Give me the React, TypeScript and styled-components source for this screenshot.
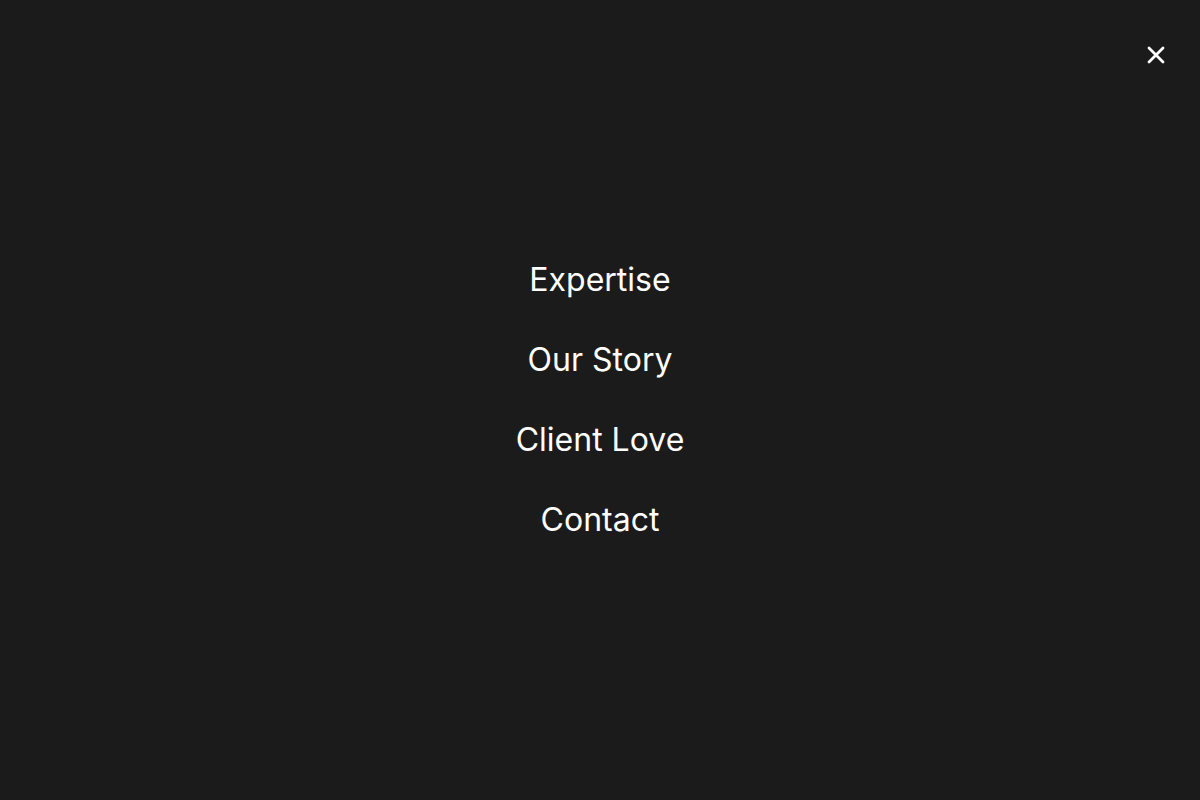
import React from 'react';
import styled, { createGlobalStyle } from 'styled-components';

const GlobalStyle = createGlobalStyle`
  html, body {
    margin: 0;
    padding: 0;
    background: #1b1b1b;
    font-family: Inter, "Noto Sans", sans-serif;
  }
`;

const links = ['Expertise', 'Our Story', 'Client Love', 'Contact'];

const App = () => {
  return (
    <>
      <GlobalStyle />
      <Overlay>
        <CloseButton aria-label="Close menu">
          <svg width="20" height="20" viewBox="0 0 20 20" fill="none">
            <path d="M3 3L17 17M17 3L3 17" stroke="#fff" strokeWidth="2.8" strokeLinecap="round" />
          </svg>
        </CloseButton>
        <Nav>
          {links.map((link) => (
            <NavLink key={link} href="#">
              {link}
            </NavLink>
          ))}
        </Nav>
      </Overlay>
    </>
  );
};

export default App;

const Overlay = styled.div`
  position: relative;
  height: 800px;
  display: flex;
  align-items: center;
  justify-content: center;
  background: #1b1b1b;
`;

const CloseButton = styled.button`
  position: absolute;
  top: 44px;
  right: 33px;
  width: 22px;
  height: 22px;
  padding: 0;
  border: none;
  background: none;
  display: flex;
  align-items: center;
  justify-content: center;
  cursor: pointer;
`;

const Nav = styled.nav`
  display: flex;
  flex-direction: column;
  align-items: center;
  gap: 42px;
`;

const NavLink = styled.a`
  color: #fff;
  font-size: 32px;
  line-height: 38px;
  font-weight: 400;
  text-decoration: none;
`;
